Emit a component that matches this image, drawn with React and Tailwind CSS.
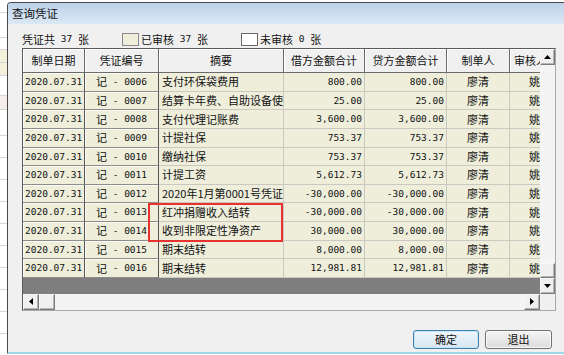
import React from 'react';

const CJK = "font-['Noto_Sans_CJK_SC',sans-serif]";
const MONO = "font-['DejaVu_Sans_Mono',monospace]";

const rows = [
  ['0006', '支付环保袋费用', '800.00', '800.00'],
  ['0007', '结算卡年费、自助设备使用费', '25.00', '25.00'],
  ['0008', '支付代理记账费', '3,600.00', '3,600.00'],
  ['0009', '计提社保', '753.37', '753.37'],
  ['0010', '缴纳社保', '753.37', '753.37'],
  ['0011', '计提工资', '5,612.73', '5,612.73'],
  ['0012', '2020年1月第0001号凭证冲销', '-30,000.00', '-30,000.00'],
  ['0013', '红冲捐赠收入结转', '-30,000.00', '-30,000.00'],
  ['0014', '收到非限定性净资产', '30,000.00', '30,000.00'],
  ['0015', '期末结转', '8,000.00', '8,000.00'],
  ['0016', '期末结转', '12,981.81', '12,981.81'],
];

function Tri({ dir }) {
  if (dir === 'up')
    return (
      <svg width="7" height="4" viewBox="0 0 7 4"><polygon points="0,4 3.5,0 7,4" fill="#000" /></svg>
    );
  if (dir === 'down')
    return (
      <svg width="7" height="4" viewBox="0 0 7 4"><polygon points="0,0 7,0 3.5,4" fill="#000" /></svg>
    );
  if (dir === 'left')
    return (
      <svg width="4" height="7" viewBox="0 0 4 7"><polygon points="4,0 4,7 0,3.5" fill="#000" /></svg>
    );
  return (
    <svg width="4" height="7" viewBox="0 0 4 7"><polygon points="0,0 0,7 4,3.5" fill="#000" /></svg>
  );
}

const sbBtn =
  'flex items-center justify-center bg-[#f0f0f0] border border-t-[#f8f8f8] border-l-[#f8f8f8] border-r-[#7a7a7a] border-b-[#7a7a7a] shadow-[inset_-1px_-1px_0_#b4b4b4]';

function HeaderCell({ w, children, className = '' }) {
  return (
    <div
      className={`${w} shrink-0 h-full flex items-center bg-[#f0f0f0] border-r border-b border-[#6a6a6a] shadow-[inset_1px_1px_0_#ffffff] ${CJK} text-[11px] leading-none text-[#111] ${className}`}
    >
      {children}
    </div>
  );
}

function Row({ r }) {
  const fixed =
    'shrink-0 h-full flex items-center bg-[#eeeedb] border-r border-r-[#555555] border-b border-b-[#8c8c8c] shadow-[inset_1px_1px_0_#fbfbf3]';
  const cell = 'shrink-0 h-full flex items-center bg-[#eeeedb] border-r border-b border-[#c9c9c2] overflow-hidden whitespace-nowrap';
  return (
    <div className="flex h-[18.64px] text-[#111]">
      <div className={`${fixed} w-[62px] pl-[2px] ${MONO} text-[9.5px] leading-none`}>2020.07.31</div>
      <div className={`${fixed} w-[74px] justify-center`}>
        <span className={`${CJK} text-[11px] leading-none`}>记</span>
        <span className={`${MONO} text-[9.5px] leading-none whitespace-pre`}> - {r[0]}</span>
      </div>
      <div className={`${cell} w-[125px] pl-[3px] ${CJK} text-[11px] leading-none`}>{r[1]}</div>
      <div className={`${cell} w-[81px] justify-end pr-[2px] ${MONO} text-[9.5px] leading-none`}>{r[2]}</div>
      <div className={`${cell} w-[82px] justify-end pr-[2px] ${MONO} text-[9.5px] leading-none`}>{r[3]}</div>
      <div className={`${cell} w-[63px] justify-center ${CJK} text-[11px] leading-none`}>廖清</div>
      <div className={`${cell} w-[63px] pl-[19px] ${CJK} text-[11px] leading-none`}>姚明</div>
    </div>
  );
}

function LeftStrip() {
  const items = [
    ['h-[13px]', 'bg-white'],
    ['h-[25px]', 'bg-white'],
    ['h-[12px]', 'bg-white'],
    ['h-[13px]', 'bg-[#f3f1dc]'],
    ['h-[13px]', 'bg-[#f3f1dc]'],
    ['h-[20px]', 'bg-white'],
    ['h-[14px]', 'bg-[#f6eded]'],
    ['h-[26px]', 'bg-white'],
    ['h-[22px]', 'bg-white'],
    ['h-[22px]', 'bg-white'],
    ['h-[22px]', 'bg-white'],
    ['h-[22px]', 'bg-white'],
    ['h-[22px]', 'bg-white'],
    ['h-[22px]', 'bg-white'],
    ['h-[22px]', 'bg-white'],
    ['h-[22px]', 'bg-white'],
    ['h-[22px]', 'bg-white'],
  ];
  return (
    <div className="w-[7px] shrink-0 h-full flex flex-col overflow-hidden bg-white">
      {items.map((it, i) => (
        <div key={i} className={`${it[0]} ${it[1]} shrink-0 border-b border-[#d6d6d6]`} />
      ))}
    </div>
  );
}

export default function App() {
  return (
    <div className="relative w-[564px] h-[355px] overflow-hidden bg-white flex">
      <LeftStrip />
      <div className="flex-1 mt-[2px] mb-[1px] flex flex-col border-l border-t border-[#4a4a4a] rounded-tl-[4px] bg-[#f0f0f0] border-b-2 border-b-[#9fd6ea] overflow-hidden">
        {/* title bar */}
        <div className={`h-[21px] shrink-0 flex items-center pl-[4px] bg-gradient-to-b from-[#bcd2e9] to-[#dce8f4] ${CJK} text-[11.5px] leading-none text-[#111]`}>
          查询凭证
        </div>
        {/* info line */}
        <div className="mt-[7px] h-[16px] ml-[14px] flex items-center text-[#111]">
          <div className="w-[100px] flex items-center">
            <span className={`${CJK} text-[11px] leading-none`}>凭证共</span>
            <span className={`${MONO} text-[9.5px] leading-none whitespace-pre`}> 37 </span>
            <span className={`${CJK} text-[11px] leading-none`}>张</span>
          </div>
          <div className="w-[119px] flex items-center">
            <div className="w-[17px] h-[13px] bg-[#eeeedb] border border-[#8a8a8a]" />
            <span className={`ml-[2px] ${CJK} text-[11px] leading-none`}>已审核</span>
            <span className={`${MONO} text-[9.5px] leading-none whitespace-pre`}> 37 </span>
            <span className={`${CJK} text-[11px] leading-none`}>张</span>
          </div>
          <div className="flex items-center">
            <div className="w-[17px] h-[13px] bg-white border border-[#6a6a6a]" />
            <span className={`ml-[2px] ${CJK} text-[11px] leading-none`}>未审核</span>
            <span className={`${MONO} text-[9.5px] leading-none whitespace-pre`}> 0 </span>
            <span className={`${CJK} text-[11px] leading-none`}>张</span>
          </div>
        </div>
        {/* table */}
        <div className="mt-px ml-[14px] w-[534px] h-[263px] shrink-0 flex border border-t-[#5a5a5a] border-l-[#5a5a5a] border-r-[#a8a8a8] border-b-[#a8a8a8]">
          <div className="w-[517px] h-full flex flex-col overflow-hidden">
            <div className="flex h-[24px] shrink-0">
              <HeaderCell w="w-[62px]" className="justify-center">制单日期</HeaderCell>
              <HeaderCell w="w-[74px]" className="justify-center">凭证编号</HeaderCell>
              <HeaderCell w="w-[125px]" className="justify-center">摘要</HeaderCell>
              <HeaderCell w="w-[81px]" className="justify-center">借方金额合计</HeaderCell>
              <HeaderCell w="w-[82px]" className="justify-center">贷方金额合计</HeaderCell>
              <HeaderCell w="w-[63px]" className="justify-center">制单人</HeaderCell>
              <HeaderCell w="w-[63px]" className="pl-[4px]">审核人</HeaderCell>
            </div>
            {rows.map((r) => (
              <Row key={r[0]} r={r} />
            ))}
            <div className="h-[16px] shrink-0 bg-[#7f7f7f]" />
            <div className="h-[16px] shrink-0 flex bg-[#f4f4f4]">
              <div className={`${sbBtn} w-[16px] h-full`}>
                <Tri dir="left" />
              </div>
              <div className={`${sbBtn} w-[16px] h-full`} />
              <div className="flex-1" />
              <div className={`${sbBtn} w-[16px] h-full`}>
                <Tri dir="right" />
              </div>
            </div>
          </div>
          <div className="w-[15px] h-full flex flex-col bg-[#f4f4f4]">
            <div className={`${sbBtn} h-[16px] shrink-0`}>
              <Tri dir="up" />
            </div>
            <div className="flex-1" />
            <div className={`${sbBtn} h-[15px] shrink-0`} />
            <div className={`${sbBtn} h-[16px] shrink-0`}>
              <Tri dir="down" />
            </div>
            <div className="h-[16px] shrink-0 bg-[#f0f0f0]" />
          </div>
        </div>
        {/* buttons */}
        <div className="mt-[19px] flex justify-end gap-[6px] pr-[12px]">
          <button className={`w-[66px] h-[19px] rounded-[3px] border border-[#3c7fb1] bg-gradient-to-b from-[#f0f6fb] to-[#d6e6f3] shadow-[inset_0_0_0_1px_#c8e6f8] flex items-center justify-center ${CJK} text-[11px] leading-none text-[#111]`}>
            确定
          </button>
          <button className={`w-[67px] h-[19px] rounded-[3px] border border-[#707070] bg-gradient-to-b from-[#f4f4f4] to-[#dcdcdc] shadow-[inset_0_0_0_1px_#fafafa] flex items-center justify-center ${CJK} text-[11px] leading-none text-[#111]`}>
            退出
          </button>
        </div>
      </div>
      {/* annotation box */}
      <div className="absolute left-[148px] top-[203px] w-[135px] h-[39px] border-2 border-[#e8322f] pointer-events-none" />
    </div>
  );
}
